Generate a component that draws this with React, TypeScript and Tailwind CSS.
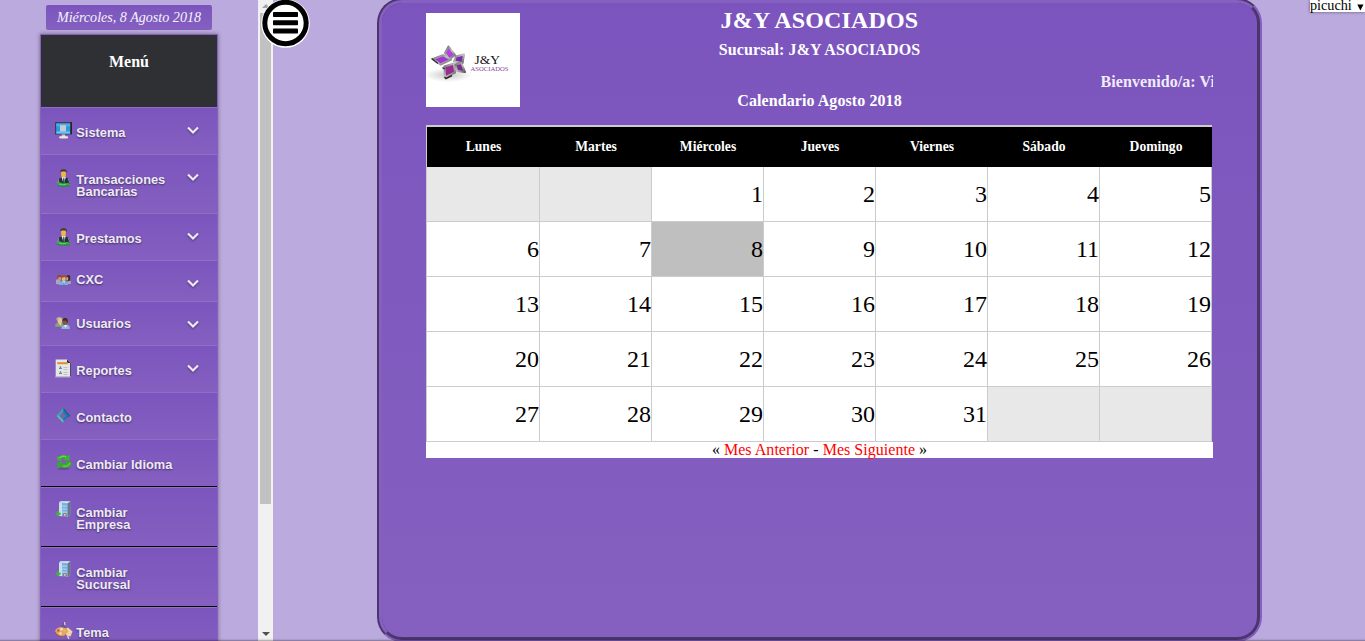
import type { ReactNode } from "react";

function MonitorIcon() {
  return (
    <svg width="18" height="18" viewBox="0 0 18 18">
      <rect x="0" y="0" width="17" height="12.5" rx="0.6" fill="#3d404c" />
      <rect x="1.2" y="1.5" width="14" height="10.2" fill="#2f98e0" />
      <rect x="1.2" y="1.5" width="14" height="3" fill="#4dabe8" />
      <path d="M1.500 9.500h13.500v2H1.500z" fill="#6cc6f5" />
      <rect x="5" y="3.200" width="6" height="6.300" fill="#c0ccd4" />
      <rect x="15.600" y="0" width="1.400" height="12" fill="#24252c" />
      <rect x="6.800" y="12.400" width="3.400" height="2.400" fill="#c9c9c4" />
      <ellipse cx="8.600" cy="15.400" rx="4.600" ry="1.300" fill="#e8e8e2" />
      <path d="M5 16.500h7" stroke="#8b8a84" strokeWidth="0.500" />
    </svg>
  );
}

function BankerIcon() {
  return (
    <svg width="18" height="18" viewBox="0 0 18 18">
      <path d="M2.200 14.500c0-3.500 1-4.800 4.200-6h4.400c3 1 4 2.500 4 6z" fill="#263038" />
      <path d="M3.500 10.500L2.200 14h1.500zM13.200 10l1.600 4" stroke="#8b97a0" strokeWidth="0.900" fill="none" />
      <path d="M6.500 7.800h4.300l-1.500 6-1.300-1z" fill="#f4f4f4" />
      <path d="M8.300 8.800h1l.5 4-1 1-.9-1z" fill="#32505c" />
      <ellipse cx="8.500" cy="4.700" rx="2.400" ry="3.800" fill="#f3b646" />
      <path d="M5.300 3.200C5 1 6.500 0 8.800.2c2.300 0 3.600 1.400 3.300 3.800L10.800 2.400H6.500z" fill="#3a3a3c" />
      <path d="M2 14.300l3-1 3.500 1.500 4.500-1 2 1.500-.5 1.600-4 .7-7.500-.5z" fill="#32ad45" />
      <path d="M4 15l3 1 4-.8" stroke="#6fdb70" strokeWidth="0.800" fill="none" />
      <path d="M2.500 16.500l6 .8 6-.6" stroke="#197a30" strokeWidth="0.700" fill="none" />
    </svg>
  );
}

function GroupIcon() {
  return (
    <svg width="18" height="12" viewBox="0 0 18 12">
      <path d="M1 10V6l2-1h2.500v5.500zM12.500 10V5.500h2l1.300 2V10z" fill="#a9a6c2" />
      <rect x="2.200" y="1" width="4.500" height="4.500" rx="2" fill="#8a4c24" />
      <rect x="3.200" y="3" width="3" height="3.400" rx="1.300" fill="#d98f62" />
      <rect x="11.600" y="1" width="3.600" height="6" rx="1.600" fill="#3a2f26" />
      <rect x="11.200" y="3" width="2" height="3.600" rx="1" fill="#d9a157" />
      <path d="M4.300 11V8.300L7 7h3.500L13 8.800V11z" fill="#74b2de" />
      <ellipse cx="8.700" cy="4.700" rx="2" ry="2.600" fill="#e8b088" />
      <path d="M6.500 4C6 1.800 7.500 1 9 1.100c1.500 0 2.300 1.200 1.900 2.900L9.500 2.900z" fill="#9a5528" />
      <path d="M7.500 7.500h2.600l-1.200 3z" fill="#e2eefa" />
      <path d="M8.800 8.300V11" stroke="#3b9a75" strokeWidth="0.900" />
    </svg>
  );
}

function PairIcon() {
  return (
    <svg width="18" height="13" viewBox="0 0 18 13">
      <path d="M.3 9.800V7.300L3 5.500h4.500l1.200 4.300z" fill="#8fa468" />
      <path d="M3.500 5.500h3L5.500 9z" fill="#dddeb0" />
      <ellipse cx="4.800" cy="3.700" rx="2.300" ry="2.800" fill="#e9c49b" />
      <path d="M1.500 3.500C1 1 2.500 0 4.500.3c2 0 3.500 1 3.200 2.800L5.500 1.800l-3 .3z" fill="#d3be7a" />
      <path d="M6.500 12V9.600L9 7.800h4l1.700 1.900V12z" fill="#8fb7de" />
      <path d="M9 7.900h3l-1.500 3z" fill="#e6f0fa" />
      <ellipse cx="10" cy="5" rx="2.300" ry="2.900" fill="#80583b" />
      <path d="M7.500 3.800C7.200 1.500 9 .8 10.700 1.100c2 .3 2.600 2.700 1.800 5.400L11.200 3.600z" fill="#3a2a22" />
    </svg>
  );
}

function ReportIcon() {
  return (
    <svg width="18" height="20" viewBox="0 0 18 20">
      <path d="M.7 17.800V.6h11.500l3.200 3v14.200z" fill="#e6e6e4" />
      <path d="M12 .4V4h3.700z" fill="#26272d" />
      <path d="M15.500 4v13.500" stroke="#444250" strokeWidth="0.900" />
      <rect x="2.300" y="3.200" width="10.500" height="2" fill="#e38b2c" />
      <path d="M4 9.300h3M5.500 7.300v2M4 14.300h3M5.500 12.300v2" stroke="#5a8fb2" strokeWidth="1.200" />
      <path d="M8.500 8.500h4M8.500 10.500h4M8.500 13.500h4M8.500 15.500h4" stroke="#b4c0c8" strokeWidth="0.900" />
      <path d="M0 18h15.500" stroke="#b5afbf" strokeWidth="0.900" />
    </svg>
  );
}

function DiamondIcon() {
  return (
    <svg width="18" height="18" viewBox="0 0 18 18">
      <path d="M8.300.8l7 7.900-2 1.600-5-5.700z" fill="#125c83" />
      <path d="M8.300 2.300l5.700 6.500-5.700 6V12l2.900-3.300-2.900-3.500z" fill="#117fa5" />
      <path d="M8.300.8L1.300 8.700l7 7.600v-3.600L4.800 8.700l3.500-3.900z" fill="#3fa3a3" />
      <path d="M2.600 8.800l5.700 6" stroke="#62c4ae" strokeWidth="1.300" />
    </svg>
  );
}

function RefreshIcon() {
  return (
    <svg width="18" height="18" viewBox="0 0 18 18">
      <ellipse cx="8.500" cy="14.800" rx="6" ry="1.300" fill="#4e3f70" opacity="0.500" />
      <path d="M2.300 6.500V1.800L4.200 3C7 .3 10.500.5 12.500 2L14.500.8v5.400H8.700l1.600-1.600C8.500 3.700 7 4.300 6 5.500l1.300 1.300z" fill="#36bc22" />
      <path d="M2.500 8.300h5.700L6.600 10c1.700 1 3.600.2 4.600-1.500L9.700 7.600h6.500v5.200l-1.800-1c-2.500 2.500-6.500 2.600-9 .8L2.500 14z" fill="#2fb41c" />
      <path d="M4 3.800c2.500-2 5-2 7-.8M15 9c-.8 2.500-4 4-7 3" fill="none" stroke="#7fe455" strokeWidth="0.900" />
    </svg>
  );
}

function ServerIcon() {
  return (
    <svg width="18" height="18" viewBox="0 0 18 18">
      <path d="M4 1.500L5.500.3h9.800V14L13 16l-9-1.200z" fill="#79b0de" />
      <path d="M4 1.500L5.500.3h9.800L13 2.300z" fill="#d3e2ec" />
      <path d="M4 1.800l3 .2v13.300l-3-.5z" fill="#c6e0f2" />
      <path d="M12.800 2.300L15.300.5v13.300L12.800 16z" fill="#6b7683" />
      <path d="M7 5l4.800.3M7 8l4.800.3M7 11l4.800.3" stroke="#b6d9f3" strokeWidth="1.100" />
      <path d="M3.300 10v5.500M.7 12.700h5" stroke="#43b33e" strokeWidth="1.900" />
      <circle cx="9.800" cy="13.900" r="1.500" fill="#d8c8cc" stroke="#a3535c" strokeWidth="0.800" />
    </svg>
  );
}

function PaletteIcon() {
  return (
    <svg width="18" height="18" viewBox="0 0 18 18">
      <path d="M8.500 1l1 5M7 3l1 4" stroke="#65516a" strokeWidth="1.100" />
      <path d="M9.500.2l.5 3" stroke="#efe7d4" strokeWidth="1.100" />
      <path d="M9 8l4-2.500 4.500 4-2 5-4-1z" fill="#f1d4a5" />
      <path d="M.3 9.500C0 6.500 4 4.800 8 5.500c5 .7 6 4 3.800 5.700-1.200 1-2 .8-1.500 2C9 15.500.8 14 .3 9.500z" fill="#e5a66b" />
      <path d="M.5 10c1 5 8 5.500 10 3" fill="none" stroke="#99602f" strokeWidth="1" />
      <circle cx="3.200" cy="8.500" r="1.200" fill="#d55339" />
      <circle cx="6.500" cy="7.200" r="1.200" fill="#f5ead7" />
      <circle cx="9.500" cy="8.700" r="1.200" fill="#efbb39" />
      <circle cx="5.500" cy="11.400" r="1.200" fill="#f1e4dc" />
      <path d="M12.500 14l1.500 3" stroke="#ede3c7" strokeWidth="1.200" />
    </svg>
  );
}

function Chevron() {
  return (
    <svg width="12" height="9" viewBox="0 0 12 9" className="drop-shadow-[0_1px_1px_rgba(0,0,0,0.4)]">
      <path d="M1 1.500l5 5 5-5" fill="none" stroke="#eeeaf4" strokeWidth="2.200" />
    </svg>
  );
}

type Item = { label: ReactNode; icon: ReactNode; box: string; iconPad: string; textPad: string; chevronPad?: string };

const light = "border-t border-[#8f70c6] ";
const dark = "border-t border-black shadow-[inset_0_1px_0_#8f70c6] ";

const items: Item[] = [
  { label: "Sistema", icon: <MonitorIcon />, box: light + "h-[47px]", iconPad: "pt-[14px]", textPad: "pt-[19px]", chevronPad: "pt-[18px]" },
  { label: <>Transacciones<br />Bancarias</>, icon: <BankerIcon />, box: light + "h-[59px]", iconPad: "pt-[14px]", textPad: "pt-[19px]", chevronPad: "pt-[18px]" },
  { label: "Prestamos", icon: <BankerIcon />, box: light + "h-[47px]", iconPad: "pt-[14px]", textPad: "pt-[19px]", chevronPad: "pt-[18px]" },
  { label: "CXC", icon: <GroupIcon />, box: light + "h-[41px]", iconPad: "pt-[13px]", textPad: "pt-[13px]", chevronPad: "pt-[18px]" },
  { label: "Usuarios", icon: <PairIcon />, box: light + "h-[44px]", iconPad: "pt-[15px]", textPad: "pt-[16px]", chevronPad: "pt-[18px]" },
  { label: "Reportes", icon: <ReportIcon />, box: light + "h-[47px]", iconPad: "pt-[13px]", textPad: "pt-[19px]", chevronPad: "pt-[18px]" },
  { label: "Contacto", icon: <DiamondIcon />, box: light + "h-[47px]", iconPad: "pt-[14px]", textPad: "pt-[19px]" },
  { label: "Cambiar Idioma", icon: <RefreshIcon />, box: light + "h-[47px]", iconPad: "pt-[14px]", textPad: "pt-[19px]" },
  { label: <>Cambiar<br />Empresa</>, icon: <ServerIcon />, box: dark + "h-[60px]", iconPad: "pt-[14px]", textPad: "pt-[20px]" },
  { label: <>Cambiar<br />Sucursal</>, icon: <ServerIcon />, box: dark + "h-[60px]", iconPad: "pt-[14px]", textPad: "pt-[20px]" },
  { label: "Tema", icon: <PaletteIcon />, box: dark + "h-[48px]", iconPad: "pt-[15px]", textPad: "pt-[20px]" },
];

function MenuRow({ item }: { item: Item }) {
  return (
    <li className={`flex shrink-0 items-start bg-linear-to-b from-[#7b55bd] to-[#8560c0] pl-[14px] ${item.box}`}>
      <span className={`w-[21.3px] shrink-0 ${item.iconPad}`}>{item.icon}</span>
      <span
        className={`whitespace-nowrap font-['Liberation_Sans',sans-serif] text-[12.8px] leading-[12px] font-bold text-[#eeeaf5] [text-shadow:0_1px_2px_rgba(0,0,0,0.5)] ${item.textPad}`}
      >
        {item.label}
      </span>
      {item.chevronPad && (
        <span className={`mr-[18px] ml-auto ${item.chevronPad}`}>
          <Chevron />
        </span>
      )}
    </li>
  );
}

function Logo() {
  return (
    <svg width="94" height="94" viewBox="0 0 94 94" className="shrink-0 bg-white">
      <defs>
        <radialGradient id="shade">
          <stop offset="0" stopColor="#777" stopOpacity="0.400" />
          <stop offset="1" stopColor="#777" stopOpacity="0" />
        </radialGradient>
        <linearGradient id="metal" x1="0" y1="0" x2="1" y2="1">
          <stop offset="0" stopColor="#666" />
          <stop offset="0.500" stopColor="#c4c4c4" />
          <stop offset="1" stopColor="#555" />
        </linearGradient>
      </defs>
      <ellipse cx="22" cy="62" rx="24" ry="7" fill="url(#shade)" />
      <g stroke="url(#metal)" strokeWidth="2" strokeLinejoin="round">
        <path d="M22.500 33.500L19 40l4 6.500 6-4.500z" fill="#b340e2" />
        <path d="M7 46l10-3.800 8 4.300-10.500 5z" fill="#a236d2" />
        <path d="M30 43.500l8-2-1.500 8.500-8.500-1.500z" fill="#7b2bb0" />
        <path d="M18.500 53.500l9.500-3 1 9-10 5z" fill="#9a2c8f" />
        <path d="M29.500 51.500l6-1.500 3.500 9-8-1z" fill="#78318b" />
      </g>
      <path d="M5.500 45.500l6.500 5M16.500 54.500l2 1.500M18.500 64l1.500 1.500 6-3" stroke="#2c2c2c" strokeWidth="1.500" fill="none" />
      <text x="48.500" y="50.500" fontFamily="Liberation Serif, serif" fontSize="13.500" textLength="25.500" fill="#111">J&amp;Y</text>
      <text x="44.500" y="58.300" fontFamily="Liberation Serif, serif" fontSize="6.500" textLength="38" lengthAdjust="spacingAndGlyphs" fill="#8b439c">ASOCIADOS</text>
    </svg>
  );
}

const weekdays = ["Lunes", "Martes", "Miércoles", "Jueves", "Viernes", "Sábado", "Domingo"];
const cells = Array.from({ length: 35 }, (_, i) => (i > 1 && i < 33 ? i - 1 : null));

function Calendar() {
  return (
    <div className="w-[786px]">
      <div className="border-t-2 border-l border-[#ccc]">
        <div className="grid h-[40px] grid-cols-[113px_repeat(6,112px)] items-center bg-black pb-[1px] text-center text-[13.6px] leading-[20px] font-bold text-white">
          {weekdays.map((d) => (
            <span key={d}>{d}</span>
          ))}
        </div>
      </div>
      <div className="grid auto-rows-[55px] grid-cols-[113px_repeat(6,112px)] border-l border-[#ccc] text-[24px] text-black">
        {cells.map((n, i) => (
          <div
            key={i}
            className={`flex items-center justify-end border-r border-b border-[#ccc] ${n === null ? "bg-[#e8e8e8]" : n === 8 ? "bg-[#bfbfbf]" : "bg-white"}`}
          >
            {n}
          </div>
        ))}
      </div>
    </div>
  );
}

export default function App() {
  return (
    <div className="relative flex h-[641px] w-[1365px] overflow-hidden bg-[#bbaadd] font-['Liberation_Serif',serif]">
      <aside className="flex h-full w-[258px] shrink-0 flex-col pt-[5px] pl-[40px]">
        <div className="ml-[6px] h-[25px] w-[166px] shrink-0 rounded-[2px] bg-linear-to-b from-[#7b55bd] to-[#8560c0] text-center text-[14.1px] leading-[25px] whitespace-nowrap text-[#f6f2fb] italic">
          Miércoles, 8 Agosto 2018
        </div>
        <ul className="mt-[4px] flex w-[178px] shrink-0 flex-col border border-[#8560c0] shadow-[0_0_4px_rgba(0,0,0,0.4)]">
          <li className="h-[72px] bg-[#2f3034] pt-[17px] text-center text-[16px] leading-[20px] font-bold text-white">Menú</li>
          {items.map((item, i) => (
            <MenuRow key={i} item={item} />
          ))}
        </ul>
      </aside>

      <div className="flex w-[15px] shrink-0 flex-col items-center justify-between bg-[#f1f1f1] pt-[4px] pb-[5px]">
        <svg width="8" height="4" viewBox="0 0 8 4"><path d="M0 4l4-4 4 4z" fill="#a3a3a3" /></svg>
        <div className="mt-[5px] mb-auto h-[491px] w-[11px] bg-[#c1c1c1]" />
        <svg width="8" height="4" viewBox="0 0 8 4"><path d="M0 0h8L4 4z" fill="#505050" /></svg>
      </div>

      <main className="-mt-[2px] ml-[104px] h-[644px] w-[885px] shrink-0 rounded-[25px] border-[5px] border-[#8560c0] bg-linear-to-b from-[#7b55bd] to-[#8560c0] pt-[10px] pl-[44px] [border-style:groove]">
        <header className="flex h-[112px] w-[787px]">
          <Logo />
          <div className="flex flex-1 flex-col text-center text-[16px] leading-[18px] font-bold tracking-[0.08px] text-white">
            <h1 className="-mt-[7px] pr-[94px] text-[24px] leading-[28px] tracking-[0.15px]">J&amp;Y ASOCIADOS</h1>
            <h2 className="mt-[7px] pr-[94px]">Sucursal: J&amp;Y ASOCIADOS</h2>
            <div className="mt-[14px] ml-auto w-[112.5px] overflow-hidden text-left whitespace-nowrap text-[#f1ebf9]">Bienvenido/a: Vi</div>
            <h3 className="mt-[1px] pr-[94px]">Calendario Agosto 2018</h3>
          </div>
        </header>
        <Calendar />
        <div className="h-[16px] w-[787px] bg-white text-center text-[16px] leading-[16px] tracking-[0.03px] text-black">
          « <a className="text-[#f00]">Mes Anterior</a> - <a className="text-[#f00]">Mes Siguiente</a> »
        </div>
      </main>

      <button className="absolute top-[-1px] left-[261px] h-[49px] w-[49px]" aria-label="Menú">
        <svg width="49" height="49" viewBox="0 0 49 49">
          <circle cx="24.500" cy="24.500" r="24.300" fill="#fff" />
          <circle cx="24.500" cy="24" r="20.700" fill="none" stroke="#000" strokeWidth="5" />
          <g fill="#000">
            <rect x="12" y="13" width="25" height="5" rx="0.800" />
            <rect x="12" y="21.300" width="25" height="5" rx="0.800" />
            <rect x="12" y="29.600" width="25" height="5" rx="0.800" />
          </g>
        </svg>
      </button>

      <div className="absolute top-0 right-0 flex h-[12px] w-[55px] items-center bg-white text-[14.2px] leading-[12px] whitespace-nowrap text-black shadow-[0_0_3px_rgba(0,0,0,0.5)]">
        <span className="-mt-[2px]">picuchi</span>
        <svg width="7" height="7" viewBox="0 0 7 7" className="mt-[2px] ml-[5px]"><path d="M.3.500h6.200L3.400 6.500z" /></svg>
      </div>
      <div className="absolute inset-x-0 bottom-0 h-px bg-black/25 shadow-[0_0_2px_rgba(0,0,0,0.4)]" />
    </div>
  );
}
